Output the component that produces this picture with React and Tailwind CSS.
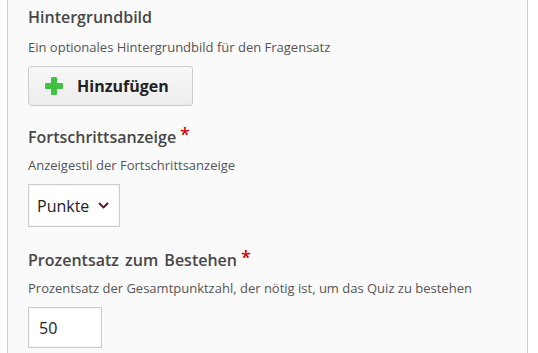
function Heading({ children, required }) {
  return (
    <div className="flex items-start text-[16px] leading-[24px] font-semibold text-[#474747] [word-spacing:2px]">
      <span>{children}</span>
      {required && <span className="ml-[4px] text-[#d40000] text-[18px] leading-[18px]">*</span>}
    </div>
  );
}

function Desc({ children }) {
  return <div className="text-[13px] leading-[16px] text-[#555]">{children}</div>;
}

export default function App() {
  const font = { fontFamily: '"Open Sans", "Noto Sans", sans-serif' };
  return (
    <div className="w-[538px] h-[353px] bg-white overflow-hidden" style={font}>
      <div className="ml-[7px] w-[521px] h-[353px] border-l border-r border-[#cfcfcf] bg-[#fafafa] pl-[20px] pt-[5px] flex flex-col">
        <section className="flex flex-col">
          <Heading>Hintergrundbild</Heading>
          <div className="mt-[10px]"><Desc>Ein optionales Hintergrundbild für den Fragensatz</Desc></div>
          <button className="mt-[11px] w-[165px] h-[40px] flex items-center rounded-[3px] border border-[#cccccc] bg-gradient-to-b from-[#f8f8f8] to-[#ececec] pl-[16px]">
            <svg width="18" height="18" viewBox="0 0 18 18" className="shrink-0">
              <rect x="6" y="0" width="6" height="18" rx="1" fill="#42c042" />
              <rect x="0" y="6" width="18" height="6" rx="1" fill="#42c042" />
            </svg>
            <span className="ml-[14px] text-[16px] font-bold text-[#222]">Hinzufügen</span>
          </button>
        </section>

        <section className="mt-[19px] flex flex-col">
          <Heading required>Fortschrittsanzeige</Heading>
          <div className="mt-[8px]"><Desc>Anzeigestil der Fortschrittsanzeige</Desc></div>
          <div className="mt-[11px] w-[92px] h-[43px] flex items-center border border-[#cccccc] bg-white shadow-[inset_0_0_3px_rgba(0,0,0,0.08)] pl-[8px]">
            <span className="text-[16px] text-[#222]">Punkte</span>
            <svg width="11" height="7" viewBox="0 0 11 7" className="ml-[9px]">
              <path d="M1 1 L5.5 5.5 L10 1" fill="none" stroke="#5a1414" strokeWidth="1.8" />
            </svg>
          </div>
        </section>

        <section className="mt-[21px] flex flex-col">
          <Heading required>Prozentsatz zum Bestehen</Heading>
          <div className="mt-[8px]"><Desc>Prozentsatz der Gesamtpunktzahl, der nötig ist, um das Quiz zu bestehen</Desc></div>
          <div className="mt-[11px] w-[74px] h-[41px] flex items-center border border-[#cccccc] bg-white shadow-[inset_0_0_3px_rgba(0,0,0,0.08)] pl-[10px]">
            <span className="text-[16px] text-[#222]">50</span>
          </div>
        </section>
      </div>
    </div>
  );
}
